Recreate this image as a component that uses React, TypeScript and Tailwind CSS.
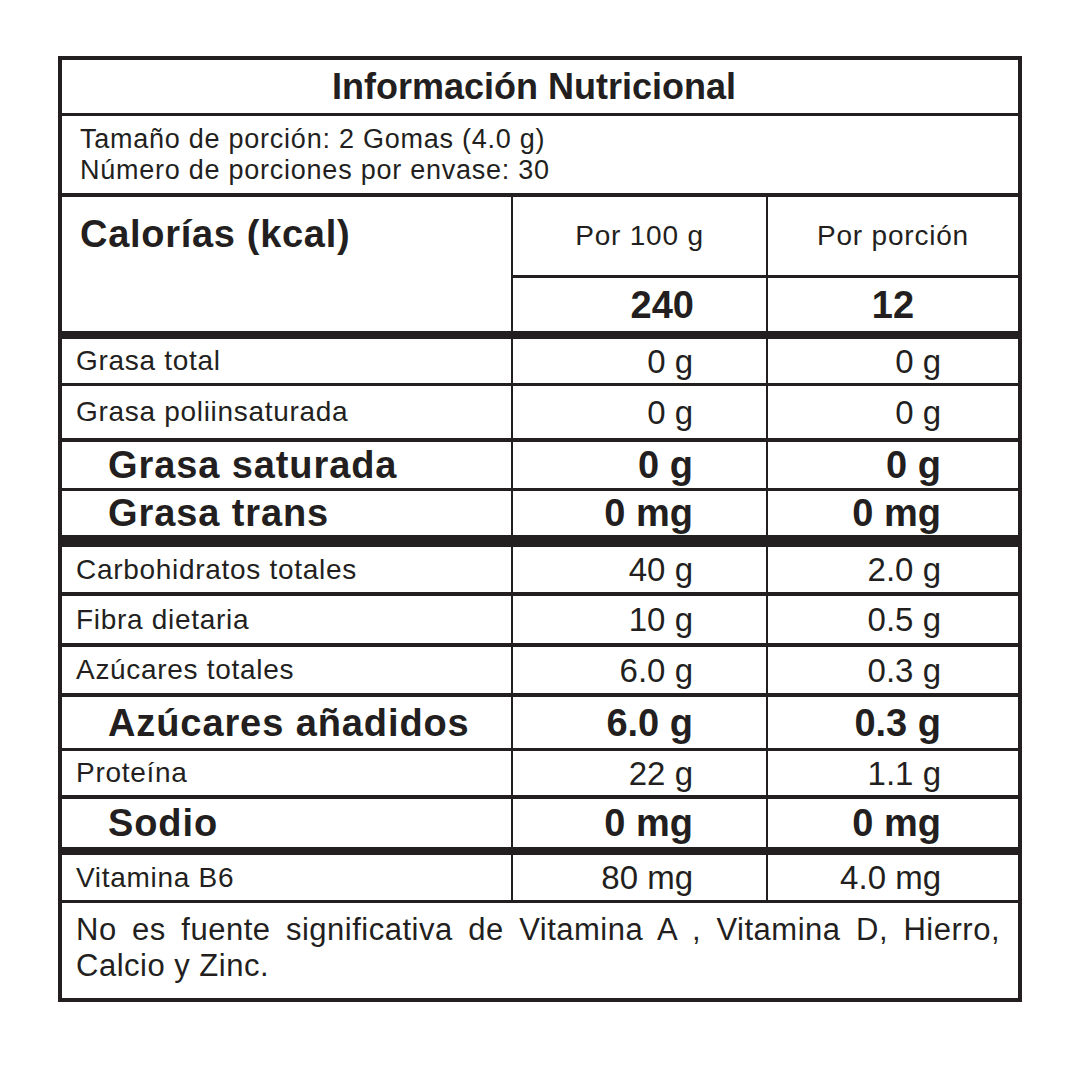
import React from "react";

type Row = {
	label: string;
	per100: string;
	perServing: string;
	bold?: boolean;
	rowClass: string;
};

// heights include the bottom rule (border-box)
const rows: Row[] = [
	{ label: "Grasa total", per100: "0 g", perServing: "0 g", rowClass: "h-[47px] border-b-[3px]" },
	{ label: "Grasa poliinsaturada", per100: "0 g", perServing: "0 g", rowClass: "h-[56px] border-b-4" },
	{ label: "Grasa saturada", per100: "0 g", perServing: "0 g", bold: true, rowClass: "h-[49px] border-b-[3px]" },
	{ label: "Grasa trans", per100: "0 mg", perServing: "0 mg", bold: true, rowClass: "h-[56px] border-b-[12px]" },
	{ label: "Carbohidratos totales", per100: "40 g", perServing: "2.0 g", rowClass: "h-[49px] border-b-4" },
	{ label: "Fibra dietaria", per100: "10 g", perServing: "0.5 g", rowClass: "h-[51px] border-b-4" },
	{ label: "Azúcares totales", per100: "6.0 g", perServing: "0.3 g", rowClass: "h-[50px] border-b-4" },
	{ label: "Azúcares añadidos", per100: "6.0 g", perServing: "0.3 g", bold: true, rowClass: "h-[54px] border-b-[3px]" },
	{ label: "Proteína", per100: "22 g", perServing: "1.1 g", rowClass: "h-[48px] border-b-4" },
	{ label: "Sodio", per100: "0 mg", perServing: "0 mg", bold: true, rowClass: "h-[56px] border-b-8" },
	{ label: "Vitamina B6", per100: "80 mg", perServing: "4.0 mg", rowClass: "h-[48px] border-b-[3px]" },
];

const NutrientRow = ({ row }: { row: Row }) => {
	const labelClass = row.bold
		? "pl-[46px] text-[38px] font-bold tracking-[0.9px]"
		: "pl-[14px] text-[28px] tracking-[0.7px]";
	const valueClass = row.bold ? "text-[38px] font-bold" : "text-[33px]";

	return (
		<div className={`flex border-[#231f20] ${row.rowClass}`}>
			<div className={`w-[449px] flex items-center leading-none ${labelClass}`}>
				{row.label}
			</div>
			<div
				className={`w-[255px] border-l-2 border-[#231f20] flex items-center justify-end pr-[73px] leading-none ${valueClass}`}
			>
				{row.per100}
			</div>
			<div
				className={`flex-1 border-l-2 border-[#231f20] flex items-center justify-end pr-[77px] leading-none ${valueClass}`}
			>
				{row.perServing}
			</div>
		</div>
	);
};

const App = () => {
	return (
		<div className="min-h-[1080px] w-[1080px] bg-white pt-[56px] pl-[58px] text-[#231f20] font-['Liberation_Sans',Arial,sans-serif]">
			<div className="w-[964px] border-4 border-[#231f20]">
				<div className="h-[56px] border-b-[3px] border-[#231f20] flex items-center justify-center pr-3">
					<h1 className="text-[36px] font-bold leading-none">
						Información Nutricional
					</h1>
				</div>

				<div className="h-[81px] border-b-4 border-[#231f20] pl-[18px] flex flex-col justify-center text-[27px] leading-[31px] tracking-[0.75px]">
					<p>Tamaño de porción: 2 Gomas (4.0 g)</p>
					<p>Número de porciones por envase: 30</p>
				</div>

				<div className="h-[142px] border-b-8 border-[#231f20] flex">
					<div className="w-[449px] pl-[18px] pt-[16px]">
						<p className="text-[38px] font-bold leading-[1.15] tracking-[0.7px]">
							Calorías (kcal)
						</p>
					</div>
					<div className="flex-1 border-l-2 border-[#231f20] flex flex-col">
						<div className="h-[81px] border-b-[3px] border-[#231f20] flex text-[28px] leading-none tracking-[0.8px]">
							<div className="w-[253px] flex items-center justify-center">
								Por 100 g
							</div>
							<div className="flex-1 border-l-2 border-[#231f20] flex items-center justify-center">
								Por porción
							</div>
						</div>
						<div className="flex-1 flex text-[38px] font-bold leading-none">
							<div className="w-[253px] flex items-center justify-end pr-[72px]">
								240
							</div>
							<div className="flex-1 border-l-2 border-[#231f20] flex items-center justify-center">
								12
							</div>
						</div>
					</div>
				</div>

				{rows.map((row) => (
					<NutrientRow key={row.label} row={row} />
				))}

				<div className="h-[95px] pl-[14px] pr-[18px] pt-[9px]">
					<p className="text-[31px] leading-[36px] text-justify tracking-[0.5px]">
						No es fuente significativa de Vitamina A , Vitamina D, Hierro,
						Calcio y Zinc.
					</p>
				</div>
			</div>
		</div>
	);
};

export default App;
